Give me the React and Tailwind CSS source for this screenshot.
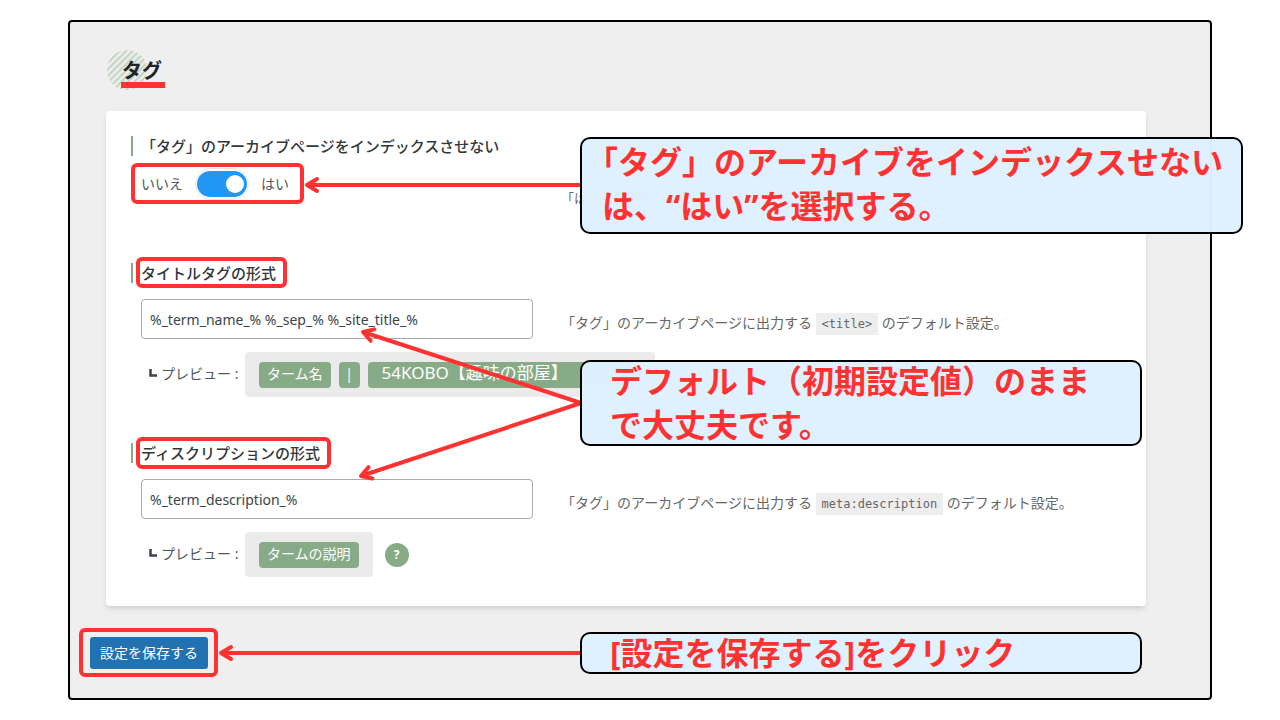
import { useState } from "react";

// Grey code chip used inside the help texts
const Code = ({ children }) => (
  <code className="bg-[#eeeeee] px-1.5 py-1 font-['DejaVu_Sans_Mono',monospace] text-xs text-[#666666]">
    {children}
  </code>
);

const Heading = ({ htmlFor, children }) => (
  <h3 className="border-l-2 border-[#8aab87] pl-2 text-[15px] leading-5 font-medium text-[#32373c]">
    <label htmlFor={htmlFor}>{children}</label>
  </h3>
);

const Tag = ({ children, className = "px-2 text-sm" }) => (
  <span
    className={`flex h-[26px] items-center rounded bg-[#88ab87] pb-0.5 whitespace-nowrap text-white ${className}`}
  >
    {children}
  </span>
);

const Preview = ({ children, help }) => (
  <div className="mt-[13px] flex items-center pl-2 text-sm text-[#50575e]">
    <svg className="mr-1 h-3 w-2" viewBox="0 0 8 12" fill="none">
      <path d="M1.5 0v6.5H8" stroke="#3c434a" strokeWidth="2.5" />
    </svg>
    <span className="w-[84px] pb-0.5 whitespace-nowrap">プレビュー :</span>
    <div className="flex h-[45px] items-center gap-2 rounded-sm bg-[#ebebeb] px-3.5">
      {children}
    </div>
    {help && (
      <button
        type="button"
        aria-label="ヘルプ"
        className="ml-3 h-6 w-6 rounded-full bg-[#88ab87] text-xs font-bold text-white"
      >
        ?
      </button>
    )}
  </div>
);

const TextField = ({ id, label, value, onChange, desc, children, help }) => (
  <div>
    <Heading htmlFor={id}>{label}</Heading>
    <div className="mt-4 pl-2.5">
      <div className="grid grid-cols-[392px_1fr] gap-x-7">
        <input
          id={id}
          type="text"
          value={value}
          onChange={(e) => onChange(e.target.value)}
          className="h-10 rounded border border-[#a7aaad] bg-white px-2 text-sm text-[#3c434a]"
        />
        <p className="pt-3.5 text-sm leading-5 text-[#666666]">{desc}</p>
      </div>
      <Preview help={help}>{children}</Preview>
    </div>
  </div>
);

const Callout = ({ className, children }) => (
  <div
    className={`absolute flex flex-col justify-center rounded-[10px] border-2 border-black bg-[#def1ff]/98 text-[32px] leading-[44px] font-bold whitespace-nowrap text-[#ff3131] ${className}`}
  >
    {children}
  </div>
);

// Red arrow with an open head, pointing from (x1, y1) to (x2, y2)
const Arrow = ({ x1, y1, x2, y2 }) => {
  const angle = (Math.atan2(y2 - y1, x2 - x1) * 180) / Math.PI;
  return (
    <g stroke="#ff3131" strokeWidth="4" fill="none">
      <line x1={x1} y1={y1} x2={x2} y2={y2} />
      <path
        d="M-10 -6L0 0L-10 6"
        strokeLinecap="round"
        strokeLinejoin="round"
        transform={`translate(${x2} ${y2}) rotate(${angle})`}
      />
    </g>
  );
};

const Mark = ({ x, y, w, h }) => (
  <rect
    x={x}
    y={y}
    width={w}
    height={h}
    rx="4"
    fill="none"
    stroke="#ff3131"
    strokeWidth="4"
  />
);

export default function App() {
  const [noindex, setNoindex] = useState(true);
  const [title, setTitle] = useState("%_term_name_% %_sep_% %_site_title_%");
  const [description, setDescription] = useState("%_term_description_%");

  return (
    <div className="relative overflow-hidden bg-white px-[68px] py-5 font-['Noto_Sans','Noto_Sans_CJK_JP',sans-serif]">
      <main className="rounded border-2 border-black bg-[#efefef] px-5 pt-7 pb-[29px]">
        <form onSubmit={(e) => e.preventDefault()}>
          <div className="mr-11 ml-4">
            <h2 className="relative mb-[21px] flex h-10 items-center pt-0.5 pl-4 text-xl font-bold text-[#1d2327]">
              <svg
                className="absolute top-0 left-0"
                width="42"
                height="42"
                viewBox="0 0 42 42"
              >
                <defs>
                  <pattern
                    id="stripes"
                    width="4.6"
                    height="4.6"
                    patternUnits="userSpaceOnUse"
                    patternTransform="rotate(45)"
                  >
                    <rect width="2.3" height="4.6" fill="#c6d6c5" />
                  </pattern>
                </defs>
                <circle cx="21" cy="20" r="20" fill="url(#stripes)" />
              </svg>
              <span className="relative">タグ</span>
            </h2>

            <section className="rounded bg-white px-[25px] pt-[25px] pb-[29px] shadow-md shadow-black/10">
              <Heading htmlFor="noindex">
                「タグ」のアーカイブページをインデックスさせない
              </Heading>
              <div className="mt-3 mb-[46px] grid grid-cols-[392px_1fr] gap-x-7 pl-2.5">
                <label className="flex h-8 items-center text-sm text-[#50575e]">
                  いいえ
                  <span className="relative mx-3 flex h-8 w-[54px] items-center justify-center rounded-full border border-[#e5e5e5]">
                    <input
                      id="noindex"
                      type="checkbox"
                      checked={noindex}
                      onChange={(e) => setNoindex(e.target.checked)}
                      className="peer h-[26px] w-[50px] appearance-none rounded-full bg-[#c3c4c7] checked:bg-[#2196f3]"
                    />
                    <span className="pointer-events-none absolute left-1.5 h-[18px] w-[18px] rounded-full bg-white peer-checked:left-[30px]" />
                  </span>
                  はい
                </label>
                <p className="pt-5 pb-[9px] text-[13px] leading-5 text-[#666666]">
                  「はい」を選択すると、デフォルトの出力が{" "}
                  <Code>noindex</Code> になります。
                </p>
              </div>

              <div className="flex flex-col gap-[46px]">
                <TextField
                  id="title-format"
                  label="タイトルタグの形式"
                  value={title}
                  onChange={setTitle}
                  desc={
                    <>
                      「タグ」のアーカイブページに出力する <Code>{"<title>"}</Code>{" "}
                      のデフォルト設定。
                    </>
                  }
                >
                  <Tag>ターム名</Tag>
                  <Tag className="w-[21px] justify-center text-sm">|</Tag>
                  <Tag className="min-w-[273px] pl-3.5 text-[17px]">
                    54KOBO【趣味の部屋】
                  </Tag>
                </TextField>
                <TextField
                  id="description-format"
                  label="ディスクリプションの形式"
                  value={description}
                  onChange={setDescription}
                  desc={
                    <>
                      「タグ」のアーカイブページに出力する{" "}
                      <Code>meta:description</Code> のデフォルト設定。
                    </>
                  }
                  help
                >
                  <Tag>タームの説明</Tag>
                </TextField>
              </div>
            </section>
          </div>

          <button
            type="submit"
            className="mt-[31px] block h-8 rounded-[3px] bg-[#2271b1] px-2.5 text-sm text-white"
          >
            設定を保存する
          </button>
        </form>
      </main>

      {/* Red marks and arrows over the settings screen */}
      <svg
        className="pointer-events-none absolute top-0 left-0"
        width="1280"
        height="720"
      >
        <rect x="121" y="82" width="44" height="6" fill="#ff3131" />
        <Mark x={133} y={165} w={169} h={37} />
        <Mark x={138} y={259} w={147} h={27} />
        <Mark x={138} y={439} w={191} h={28} />
        <Mark x={81} y={630} w={135} h={45} />
        <Arrow x1={581} y1={185} x2={307} y2={185} />
        <Arrow x1={581} y1={403} x2={363} y2={332} />
        <Arrow x1={581} y1={403} x2={361} y2={476} />
        <Arrow x1={581} y1={653} x2={221} y2={653} />
      </svg>

      <Callout className="top-[137px] left-[580px] h-[97px] w-[663px] pb-1 pl-1">
        <p>「タグ」のアーカイブをインデックスせない</p>
        <p className="pl-4">は、“はい”を選択する。</p>
      </Callout>
      <Callout className="top-[360px] left-[580px] h-[86px] w-[562px] pl-7">
        <p>デフォルト（初期設定値）のまま</p>
        <p>で大丈夫です。</p>
      </Callout>
      <Callout className="top-[632px] left-[580px] h-[42px] w-[562px] pl-7">
        <p>[設定を保存する]をクリック</p>
      </Callout>
    </div>
  );
}
